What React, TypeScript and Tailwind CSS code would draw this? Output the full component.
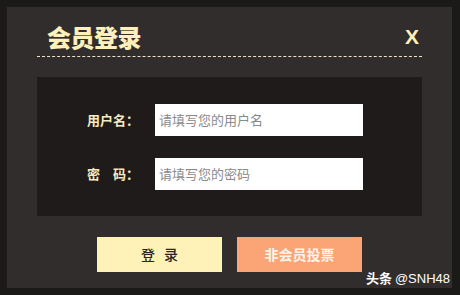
import React from "react";

export default function App() {
  const cjk = { fontFamily: '"Noto Sans CJK SC", "Noto Sans", sans-serif' };
  return (
    <div className="w-[460px] h-[295px] bg-[#1c1a19] p-[7px] relative" style={cjk}>
      <div className="w-[445px] h-[281px] bg-[#312d2c] px-[30px] flex flex-col">
        <div className="h-[50px] flex items-end justify-between border-b border-dashed border-[#ece3c8] pb-[4px]">
          <div className="pl-[10px] text-[24px] leading-[30px] font-black text-[#fdf0bb] tracking-[-0.5px]">会员登录</div>
          <div className="pr-[3px] pb-[4px] text-[21px] leading-[22px] font-bold text-[#fdf0bb]" style={{ fontFamily: '"Liberation Sans", Arial, sans-serif' }}>X</div>
        </div>
        <div className="mt-[20px] h-[139px] bg-[#1e1b1a] flex flex-col pt-[27px] gap-[22px]">
          <div className="flex items-center">
            <div className="ml-[50px] w-[58px] text-[13px] font-bold text-[#f7eac0] leading-[32px]">用户名：</div>
            <div className="ml-[10px] w-[208px] h-[32px] bg-white flex items-center pl-[4px] text-[13px] text-[#8a8a8a]">请填写您的用户名</div>
          </div>
          <div className="flex items-center">
            <div className="ml-[50px] w-[58px] text-[13px] font-bold text-[#f7eac0] leading-[32px]">密　码：</div>
            <div className="ml-[10px] w-[208px] h-[32px] bg-white flex items-center pl-[4px] text-[13px] text-[#8a8a8a]">请填写您的密码</div>
          </div>
        </div>
        <div className="mt-[21px] flex justify-center gap-[15px]">
          <div className="w-[125px] h-[35px] bg-[#fef2b9] flex items-center justify-center gap-[9px] text-[14px] font-medium text-[#2a2522]">
            <span>登</span>
            <span>录</span>
          </div>
          <div className="w-[125px] h-[35px] bg-[#fba577] flex items-center justify-center text-[14px] font-bold text-[#fdf4ea]">非会员投票</div>
        </div>
      </div>
      <div className="absolute right-[10px] bottom-[8px] text-[13px] leading-[16px] text-white" style={cjk}>
        <span className="font-bold">头条</span> <span style={{ fontFamily: '"Liberation Sans", Arial, sans-serif' }}>@SNH48</span>
      </div>
    </div>
  );
}
